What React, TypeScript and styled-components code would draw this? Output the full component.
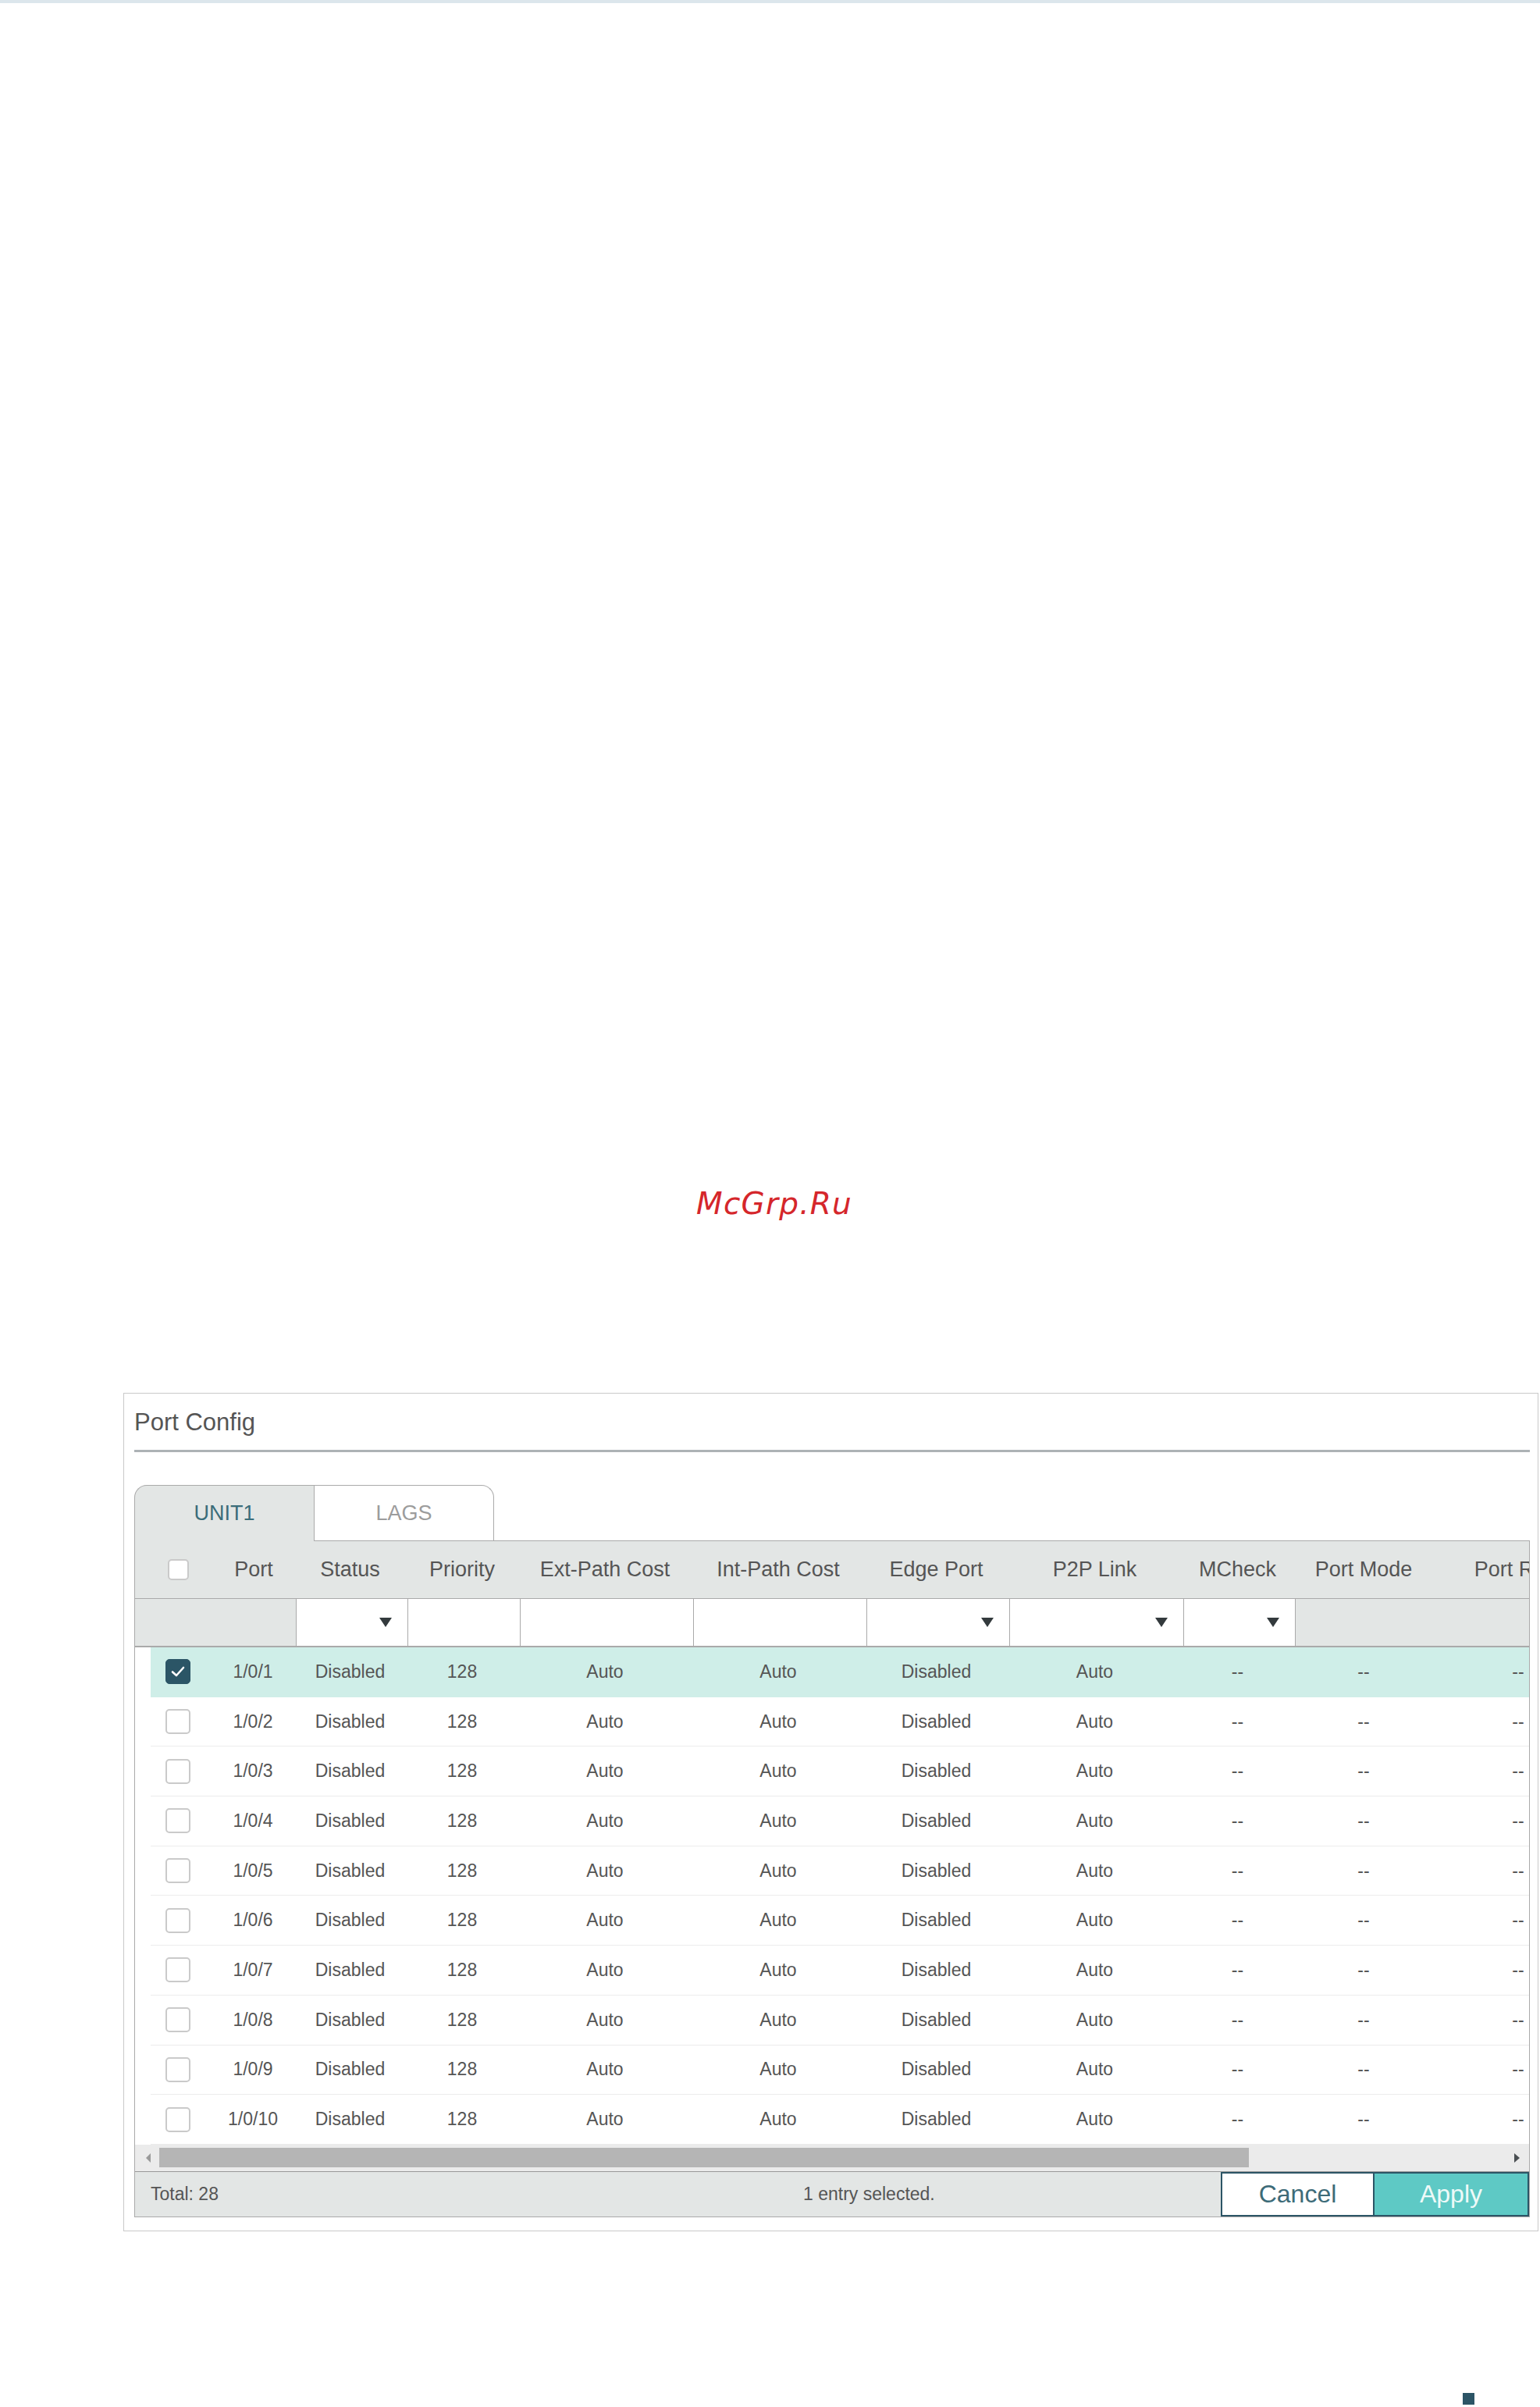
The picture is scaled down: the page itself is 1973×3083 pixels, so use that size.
import React from "react"
import styled, { createGlobalStyle, css } from "styled-components"

const GlobalStyle = createGlobalStyle`
  html, body {
    margin: 0;
    padding: 0;
    background: #ffffff;
  }
  body {
    font-family: "Liberation Sans", Arial, sans-serif;
    color: #555555;
  }
`

const HEAD_COLS = [110, 96, 143, 144, 222, 222, 183, 223, 143, 180, 216]
const BODY_COLS = [90, ...HEAD_COLS.slice(1)]
const FILTER_COLS = [206, 143, 144, 222, 222, 183, 223, 143, 396]

const toTemplate = (cols: number[]) => cols.map(c => `${c}px`).join(" ")

const Page = styled.div`
  width: 1973px;
  min-height: 3083px;
  display: flex;
  flex-direction: column;
`

const TopStrip = styled.div`
  height: 4px;
  background: #dce6ec;
`

const Watermark = styled.div`
  margin-top: 1513px;
  height: 50px;
  line-height: 50px;
  padding-left: 11px;
  text-align: center;
  font-family: "DejaVu Sans", "Liberation Sans", sans-serif;
  font-style: italic;
  font-size: 39px;
  letter-spacing: 1.2px;
  color: #d5262b;
`

const Panel = styled.section`
  margin-top: 217px;
  margin-left: 158px;
  width: 1813px;
  box-sizing: border-box;
  border: 1px solid #c9c9c9;
  padding: 0 10px 17px 13px;
`

const PanelTitle = styled.h2`
  margin: 0;
  padding: 17px 0 15px 0;
  font-size: 31px;
  line-height: 40px;
  font-weight: normal;
  color: #555555;
  border-bottom: 3px solid #adb2b5;
`

const Tabs = styled.div`
  margin-top: 42px;
  display: flex;
  height: 71px;
`

const Tab = styled.div<{ $active?: boolean }>`
  position: relative;
  z-index: 1;
  box-sizing: border-box;
  display: flex;
  align-items: center;
  justify-content: center;
  font-size: 27px;
  border-top: 1px solid #aaaaaa;
  ${props =>
    props.$active
      ? css`
          width: 230px;
          height: 72px;
          margin-bottom: -1px;
          background: #e3e6e5;
          color: #3b6d7a;
          border-left: 1px solid #aaaaaa;
          border-top-left-radius: 16px;
        `
      : css`
          width: 231px;
          background: #ffffff;
          color: #9c9c9c;
          border-left: 1px solid #aaaaaa;
          border-right: 1px solid #aaaaaa;
          border-top-right-radius: 16px;
        `}
`

const TableBox = styled.div`
  border: 1px solid #aaaaaa;
`

const Scroller = styled.div`
  overflow: hidden;
`

const GridRow = styled.div<{ $cols: string }>`
  display: grid;
  grid-template-columns: ${props => props.$cols};
  width: max-content;
  box-sizing: border-box;
`

const HeaderRow = styled(GridRow)`
  height: 74px;
  background: #e3e6e5;
  border-bottom: 1px solid #aaaaaa;
  font-size: 27px;
  color: #555555;
`

const HeadCell = styled.div<{ $shift?: number }>`
  display: flex;
  align-items: center;
  justify-content: center;
  white-space: nowrap;
  padding-right: ${props => props.$shift ?? 4}px;
`

const CheckCell = styled.div<{ $pad: number }>`
  display: flex;
  align-items: center;
  padding-left: ${props => props.$pad}px;
`

const FilterRow = styled(GridRow)`
  height: 62px;
  border-bottom: 2px solid #aaaaaa;
`

const FilterCell = styled.div<{ $gray?: boolean; $first?: boolean }>`
  box-sizing: border-box;
  background: ${props => (props.$gray ? "#e3e6e5" : "#ffffff")};
  border-left: ${props => (props.$first ? "none" : "1px solid #aaaaaa")};
  display: flex;
  align-items: center;
  justify-content: flex-end;
  padding-right: 20px;
`

const DropArrow = styled.span`
  width: 0;
  height: 0;
  border-left: 8px solid transparent;
  border-right: 8px solid transparent;
  border-top: 12px solid #333a3d;
`

const Body = styled.div`
  padding-left: 20px;
`

const DataRow = styled(GridRow)<{ $selected?: boolean }>`
  height: 63.7px;
  background: ${props => (props.$selected ? "#cfeee8" : "#ffffff")};
  border-bottom: 1px solid ${props => (props.$selected ? "#cfeee8" : "#ececec")};
  font-size: 23px;
  color: #555555;
`

const Cell = styled.div<{ $shift?: number }>`
  display: flex;
  align-items: center;
  justify-content: center;
  white-space: nowrap;
  padding-right: ${props => props.$shift ?? 4}px;
`

const Box = styled.span<{ $checked?: boolean; $size: number }>`
  box-sizing: border-box;
  width: ${props => props.$size}px;
  height: ${props => props.$size}px;
  border-radius: 5px;
  display: flex;
  align-items: center;
  justify-content: center;
  ${props =>
    props.$checked
      ? css`
          background: #2b5566;
          border: 1px solid #2b5566;
        `
      : css`
          background: #ffffff;
          border: 2px solid #cacaca;
        `}
`

const ScrollBar = styled.div`
  height: 34px;
  background: #ebebeb;
  display: flex;
  align-items: center;
  padding: 0 12px 0 14px;
  box-sizing: border-box;
`

const ScrollArrow = styled.span<{ $dir: "left" | "right" }>`
  width: 0;
  height: 0;
  border-top: 6px solid transparent;
  border-bottom: 6px solid transparent;
  ${props =>
    props.$dir === "left"
      ? css`
          border-right: 6px solid #9a9a9a;
        `
      : css`
          border-left: 7px solid #4a4f52;
          margin-left: auto;
        `}
`

const Thumb = styled.span`
  margin-left: 11px;
  width: 1396px;
  height: 25px;
  background: #b5b5b5;
`

const Footer = styled.div`
  height: 58px;
  box-sizing: border-box;
  border-top: 1px solid #999999;
  background: #e3e6e5;
  display: flex;
  align-items: stretch;
  font-size: 23px;
  color: #555555;
`

const FooterText = styled.div<{ $width?: number }>`
  display: flex;
  align-items: center;
  width: ${props => (props.$width ? `${props.$width}px` : "auto")};
  flex: ${props => (props.$width ? "none" : "1")};
  padding-left: ${props => (props.$width ? "20px" : "0")};
  box-sizing: border-box;
`

const Button = styled.button<{ $primary?: boolean }>`
  width: ${props => (props.$primary ? "198px" : "197px")};
  margin: 0;
  padding: 0;
  font-family: "Liberation Sans", Arial, sans-serif;
  font-size: 32px;
  border: 2px solid #2c5566;
  ${props =>
    props.$primary
      ? css`
          background: #5ec9c5;
          color: #eefaf8;
          border-left: none;
        `
      : css`
          background: #ffffff;
          color: #3d6b78;
        `}
`

const PageMark = styled.div`
  margin-top: 207px;
  margin-left: 1874px;
  width: 15px;
  height: 15px;
  background: #2c5566;
`

const HEADERS = [
  "Port",
  "Status",
  "Priority",
  "Ext-Path Cost",
  "Int-Path Cost",
  "Edge Port",
  "P2P Link",
  "MCheck",
  "Port Mode",
  "Port Role",
]

const FILTERS: { gray?: boolean; arrow?: boolean }[] = [
  { gray: true },
  { arrow: true },
  {},
  {},
  {},
  { arrow: true },
  { arrow: true },
  { arrow: true },
  { gray: true },
]

const rows = Array.from({ length: 10 }, (_, i) => ({
  port: `1/0/${i + 1}`,
  values: ["Disabled", "128", "Auto", "Auto", "Disabled", "Auto", "--", "--", "--"],
}))

const CheckMark = () => (
  <svg width="20" height="16" viewBox="0 0 20 16">
    <polyline
      points="3,8.5 8,13 17,3"
      fill="none"
      stroke="#ffffff"
      strokeWidth="2.6"
      strokeLinecap="round"
      strokeLinejoin="round"
    />
  </svg>
)

export default function App() {
  return (
    <Page>
      <GlobalStyle />
      <TopStrip />
      <Watermark>McGrp.Ru</Watermark>
      <Panel>
        <PanelTitle>Port Config</PanelTitle>
        <Tabs>
          <Tab $active>UNIT1</Tab>
          <Tab>LAGS</Tab>
        </Tabs>
        <TableBox>
          <Scroller>
            <HeaderRow $cols={toTemplate(HEAD_COLS)}>
              <CheckCell $pad={42}>
                <Box $size={27} />
              </CheckCell>
              {HEADERS.map((h, i) => (
                <HeadCell key={h} $shift={i === 0 ? 12 : undefined}>
                  {h}
                </HeadCell>
              ))}
            </HeaderRow>
            <FilterRow $cols={toTemplate(FILTER_COLS)}>
              {FILTERS.map((f, i) => (
                <FilterCell key={i} $gray={f.gray} $first={i === 0}>
                  {f.arrow && <DropArrow />}
                </FilterCell>
              ))}
            </FilterRow>
            <Body>
              {rows.map((r, i) => (
                <DataRow key={r.port} $cols={toTemplate(BODY_COLS)} $selected={i === 0}>
                  <CheckCell $pad={19}>
                    <Box $size={32} $checked={i === 0}>
                      {i === 0 && <CheckMark />}
                    </Box>
                  </CheckCell>
                  <Cell $shift={14}>{r.port}</Cell>
                  {r.values.map((v, j) => (
                    <Cell key={j}>{v}</Cell>
                  ))}
                </DataRow>
              ))}
            </Body>
          </Scroller>
          <ScrollBar>
            <ScrollArrow $dir="left" />
            <Thumb />
            <ScrollArrow $dir="right" />
          </ScrollBar>
          <Footer>
            <FooterText $width={856}>Total: 28</FooterText>
            <FooterText>1 entry selected.</FooterText>
            <Button>Cancel</Button>
            <Button $primary>Apply</Button>
          </Footer>
        </TableBox>
      </Panel>
      <PageMark />
    </Page>
  )
}
